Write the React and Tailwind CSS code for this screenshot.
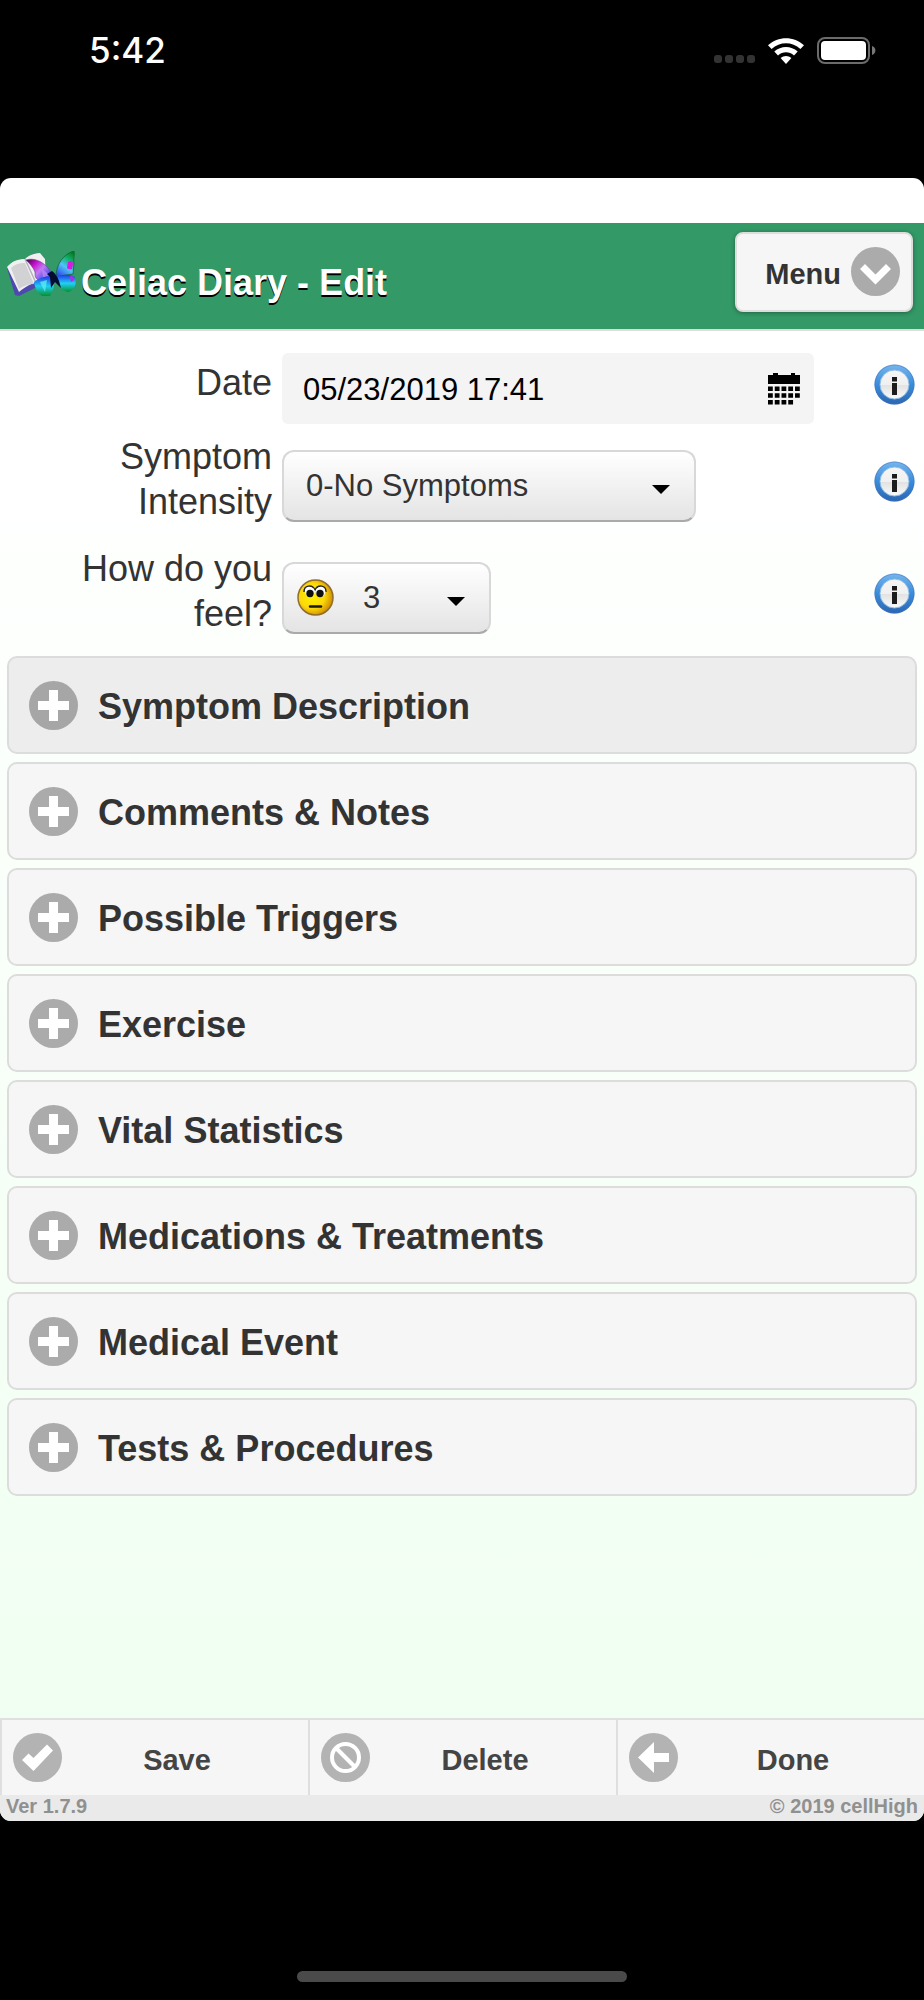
import { useState } from 'react';

const sections = [
  'Symptom Description',
  'Comments & Notes',
  'Possible Triggers',
  'Exercise',
  'Vital Statistics',
  'Medications & Treatments',
  'Medical Event',
  'Tests & Procedures',
];

const intensities = ['0-No Symptoms', '1-Very Mild', '2-Mild', '3-Moderate', '4-Severe', '5-Very Severe'];

const icons = {
  plus: <path d="M20 9h9v11h11v9H29v11h-9V29H9v-9h11z" fill="#fff" />,
  down: <path d="M9 22l5-5 10.500 10.500L35 17l5 5-15.500 15.500z" fill="#fff" />,
  check: <path d="M9 27l6.500-6.500 5 4.500L34 11.500l6 6L20.500 38z" fill="#fff" />,
  forbidden: (
    <g fill="none" stroke="#fff" strokeWidth="4">
      <circle cx="24.5" cy="24.5" r="13.5" />
      <path d="M15 15l19 19" />
    </g>
  ),
  back: <path d="M9 24.5L25 9v11h15v9H25v11z" fill="#fff" />,
};

function DiscIcon({ name, className = 'text-[#ababab]' }) {
  return (
    <svg viewBox="0 0 49 49" className={`size-[49px] shrink-0 ${className}`} aria-hidden="true">
      <circle cx="24.5" cy="24.5" r="24.5" fill="currentColor" />
      {icons[name]}
    </svg>
  );
}

function StatusBar() {
  return (
    <div className="flex h-[178px] items-start justify-between pr-12 pl-[89px] pt-[29px]">
      <span className="font-[Inter,sans-serif] text-[35px] leading-[43px] font-medium text-white">5:42</span>
      <div className="flex items-center gap-[13px] pt-2">
        <div className="flex gap-[3px] pt-[17px]">
          {[0, 1, 2, 3].map((n) => <span key={n} className="size-2 rounded-[3px] bg-[#333]" />)}
        </div>
        <svg viewBox="0 0 36 26" className="h-[26px] w-9" aria-hidden="true">
          <path d="M0 7.2C10-2.2 26-2.2 36 7.2l-3.600 3.800c-8.200-7.700-20.600-7.700-28.800 0z" fill="#fff" />
          <path d="M6.300 13.500c6.600-6.100 16.800-6.100 23.400 0l-3.700 3.900c-4.600-4.100-11.400-4.100-16 0z" fill="#fff" />
          <path d="M12.600 20.100c3.100-2.700 7.700-2.700 10.800 0L18 26z" fill="#fff" />
        </svg>
        <svg viewBox="0 0 59 27" className="h-[27px] w-[59px]" aria-hidden="true">
          <rect x="1" y="1" width="51" height="25" rx="7" fill="none" stroke="#6b6b6b" strokeWidth="2" />
          <rect x="4" y="4" width="45" height="19" rx="4" fill="#fff" />
          <path d="M55 9c4.500 1.500 4.500 7.500 0 9z" fill="#777" />
        </svg>
      </div>
    </div>
  );
}

function Logo() {
  return (
    <svg viewBox="0 0 69 45" className="h-[45px] w-[69px] shrink-0" aria-hidden="true">
      <defs>
        <linearGradient id="upperLeft" x1="0" y1=".1" x2="1" y2=".9">
          <stop offset="0" stopColor="#4a0a44" />
          <stop offset=".25" stopColor="#c810d0" />
          <stop offset=".5" stopColor="#c07cf0" />
          <stop offset=".75" stopColor="#5a50f0" />
          <stop offset="1" stopColor="#0a1060" />
        </linearGradient>
        <linearGradient id="upperRight" x1=".8" y1="0" x2=".3" y2="1">
          <stop offset="0" stopColor="#047a18" />
          <stop offset=".3" stopColor="#12b070" />
          <stop offset=".6" stopColor="#4fc4f8" />
          <stop offset="1" stopColor="#3050e8" />
        </linearGradient>
        <linearGradient id="lower" x1="0" y1="0" x2="0" y2="1">
          <stop offset="0" stopColor="#2038e8" />
          <stop offset=".5" stopColor="#20d0f4" />
          <stop offset="1" stopColor="#07902c" />
        </linearGradient>
      </defs>
      <path d="M0 17l8 27 4 1 24-12-4-28-4-3-11 7z" fill="#4f48b0" />
      <path d="M0 16C5 10 11 8 18 8c4-4 10-6 15-6l5 6 1 20c-10 2-20 7-27 13z" fill="#f0f0f0" />
      <path d="M4 17c4-4 9-5 14-5l9 21c-6 0-11 2-15 5z" fill="#d2d2d4" />
      <path d="M18 8l11 24" fill="none" stroke="#b4b0bc" strokeWidth="1.500" />
      <path d="M19 9c10-3 21 3 28 17-3 5-8 5-14 4-5-2-5-5-5-9-2-5-5-8-9-12z" fill="url(#upperLeft)" stroke="#6a3c90" strokeWidth=".6" />
      <path d="M35 18l10 8-9 2z" fill="#c090ee" opacity=".7" />
      <path d="M27 31c5-4 13-7 20-5 1 8-1 14-4 19h-8c-5-3-7-8-8-14z" fill="url(#lower)" />
      <path d="M33 31l7-2-2 12z" fill="#5ce8f0" opacity=".8" />
      <path d="M49 26c0-12 7-23 18-26 1 4-1 8 0 12l-1 11c-5 1-11 1-17 3z" fill="url(#upperRight)" stroke="#0b6a34" strokeWidth=".8" />
      <path d="M61 11c3-2 5-1 5 2l-1 5c-2 1-4 0-5-1z" fill="#d818e0" />
      <path d="M49 26c7-3 14-3 19 0 2 6 0 13-6 15-7 0-11-7-13-15z" fill="url(#lower)" />
      <path d="M63 25c3 0 5 2 4 4l-3 2z" fill="#b828e0" />
      <path d="M45 20c3 2 5 5 7 10l2 7-6-6-4 6-1-11-3-3z" fill="#060c30" />
    </svg>
  );
}

function InfoButton({ label }) {
  return (
    <button type="button" aria-label={`About ${label}`} className="mt-[11px] size-[41px] shrink-0 rounded-full">
      <svg viewBox="0 0 41 41" aria-hidden="true">
        <defs>
          <linearGradient id="ring" x1="0" y1="0" x2="0" y2="1">
            <stop offset="0" stopColor="#76b6ec" />
            <stop offset=".5" stopColor="#3a8cda" />
            <stop offset="1" stopColor="#2c66b0" />
          </linearGradient>
          <linearGradient id="face" x1="0" y1="0" x2="0" y2="1">
            <stop offset="0" stopColor="#f6f6f6" />
            <stop offset=".5" stopColor="#f0f0f0" />
            <stop offset=".52" stopColor="#e2e2e2" />
            <stop offset="1" stopColor="#fafafa" />
          </linearGradient>
        </defs>
        <circle cx="20.500" cy="20.500" r="20" fill="url(#ring)" />
        <circle cx="20.500" cy="20.500" r="19.500" fill="none" stroke="#4a6fc0" strokeOpacity=".5" />
        <circle cx="20.500" cy="20.500" r="14.500" fill="url(#face)" stroke="#8dbce6" />
        <path d="M18 13h5v4.500h-5zM18 19h5v12h-5z" fill="#1c1c1c" />
      </svg>
    </button>
  );
}

function CalendarIcon() {
  const days = [0, 1, 2].flatMap((r) => [0, 1, 2, 3, 4].map((c) => [c, r])).filter(([c, r]) => !(c === 4 && r === 2));
  return (
    <svg viewBox="0 0 32 32" className="size-8" aria-hidden="true">
      <path d="M0 2h5V0h5v2h13V0h4v2h5v9H0z" />
      {days.map(([c, r]) => <rect key={`${c}-${r}`} x={c * 6.75} y={13.5 + r * 6.75} width="4.800" height="4.500" />)}
    </svg>
  );
}

function Smiley() {
  return (
    <svg viewBox="0 0 37 37" className="size-[37px]" aria-hidden="true">
      <defs>
        <radialGradient id="skin" cx=".4" cy=".45" r=".6">
          <stop offset="0" stopColor="#fff200" />
          <stop offset=".6" stopColor="#fbd80a" />
          <stop offset="1" stopColor="#d08c00" />
        </radialGradient>
      </defs>
      <circle cx="18.500" cy="18.500" r="17.500" fill="url(#skin)" stroke="#8f6d2c" strokeWidth="1.500" />
      <path d="M7 13c0-7 8-8 11-2 3-6 11-5 11 2" fill="#fff" stroke="#222" strokeWidth="1.500" />
      <circle cx="13" cy="13" r="4.800" fill="#fff" />
      <circle cx="23.500" cy="13" r="4.800" fill="#fff" />
      <circle cx="13" cy="14.500" r="3.700" fill="#111" />
      <circle cx="23" cy="14.500" r="3.700" fill="#111" />
      <path d="M13 27.500h11" stroke="#1a1a00" strokeWidth="2.500" strokeLinecap="round" />
    </svg>
  );
}

function Caret() {
  return (
    <svg viewBox="0 0 18 9" className="pointer-events-none absolute top-[35px] right-[26px] h-[9px] w-[18px]" aria-hidden="true">
      <path d="M0 0h18L9 9z" />
    </svg>
  );
}

function Row({ id, label, children, labelClass = '', fieldClass = 'pt-4' }) {
  return (
    <div className="flex items-start gap-[10px] pr-[9px]">
      <label htmlFor={id} className={`w-[272px] shrink-0 pl-16 text-right text-4xl leading-[45px] text-[#333] ${labelClass}`}>{label}</label>
      <div className={`flex flex-1 items-start justify-between ${fieldClass}`}>
        {children}
        <InfoButton label={label} />
      </div>
    </div>
  );
}

const selectClass = 'h-[72px] w-full appearance-none rounded-xl border-2 border-[#d8d8d8] border-b-[#aaa] bg-linear-to-b from-white to-[#e4e4e4] text-[31px] text-[#333]';

function FooterButton({ icon, children }) {
  return (
    <button type="button" className="flex h-[77px] flex-1 items-center border-t-2 border-l-2 border-[#dfdfdf] bg-[#f6f6f6] pl-[11px] text-[29px] font-bold text-[#444]">
      <DiscIcon name={icon} className="text-[#b3b3b3]" />
      <span className="flex-1 pt-[6px] pr-[16px]">{children}</span>
    </button>
  );
}

export default function App() {
  const [date, setDate] = useState('05/23/2019 17:41');
  const [intensity, setIntensity] = useState(intensities[0]);
  const [feeling, setFeeling] = useState('3');

  return (
    <div className="flex min-h-screen flex-col bg-black font-['Liberation_Sans',Arial,sans-serif]">
      <StatusBar />
      <div className="flex flex-1 flex-col overflow-hidden rounded-[11px] bg-linear-to-b from-white from-15% to-[#effff0] pt-[45px]">
        <header className="flex h-[108px] items-start justify-between border-b-2 border-[#ddd] bg-[#339966] pr-[11px] pl-[7px]">
          <div className="flex pt-7">
            <Logo />
            <h1 className="pt-[14px] pl-[5px] text-4xl leading-[36px] font-bold text-white [text-shadow:0_2px_0_#000]">Celiac Diary - Edit</h1>
          </div>
          <button type="button" className="mt-[9px] flex h-20 items-center gap-[10px] rounded-lg border-2 border-[#ddd] bg-[#f6f6f6] pr-[11px] pb-[2px] pl-7 text-[29px] font-bold text-[#333] shadow-[0_1px_4px_rgba(0,0,0,0.35)]">
            <span className="pt-2">Menu</span>
            <DiscIcon name="down" />
          </button>
        </header>

        <form className="flex flex-1 flex-col pt-[22px]" onSubmit={(e) => e.preventDefault()}>
          <div className="flex flex-col">
            <Row id="date" label="Date" labelClass="pt-[7px]" fieldClass="">
              <div className="relative mr-[60px] flex-1">
                <input id="date" value={date} onChange={(e) => setDate(e.target.value)} className="h-[71px] w-full rounded-md bg-[#f4f4f4] pt-[2px] pr-16 pl-[21px] text-[31px] text-black" />
                <button type="button" aria-label="Pick a date" className="absolute top-5 right-[14px]"><CalendarIcon /></button>
              </div>
            </Row>
            <div className="mt-[10px]">
              <Row id="intensity" label="Symptom Intensity">
                <div className="relative w-[414px]">
                  <select id="intensity" value={intensity} onChange={(e) => setIntensity(e.target.value)} className={`${selectClass} pl-[22px]`}>
                    {intensities.map((item) => <option key={item}>{item}</option>)}
                  </select>
                  <Caret />
                </div>
              </Row>
            </div>
            <div className="mt-[22px]">
              <Row id="feeling" label="How do you feel?">
                <div className="relative w-[209px]">
                  <select id="feeling" value={feeling} onChange={(e) => setFeeling(e.target.value)} className={`${selectClass} pl-[79px]`}>
                    {[1, 2, 3, 4, 5].map((n) => <option key={n}>{n}</option>)}
                  </select>
                  <span className="pointer-events-none absolute top-[17px] left-[15px]"><Smiley /></span>
                  <Caret />
                </div>
              </Row>
            </div>
          </div>

          <div className="mt-5 flex flex-col gap-2 px-[7px] pb-12">
            {sections.map((title, i) => (
              <button key={title} type="button" aria-expanded="false" className={`flex h-[98px] items-center gap-5 rounded-[10px] border-2 border-[#dcdcdc] pl-5 text-left text-4xl font-bold text-[#333] ${i === 0 ? 'bg-[#ededed]' : 'bg-[#f6f6f6]'}`}>
                <DiscIcon name="plus" className={i === 0 ? 'text-[#a6a6a6]' : 'text-[#ababab]'} />
                <span className="pt-[3px] [text-shadow:0_2px_0_#f3f3f3]">{title}</span>
              </button>
            ))}
          </div>

          <div className="mt-auto flex">
            <FooterButton icon="check">Save</FooterButton>
            <FooterButton icon="forbidden">Delete</FooterButton>
            <FooterButton icon="back">Done</FooterButton>
          </div>
        </form>
        <footer className="flex h-[26px] justify-between bg-[#eaeaea] px-[6px] text-xl leading-[23px] font-bold text-[#909090]">
          <span>Ver 1.7.9</span>
          <span>© 2019 cellHigh</span>
        </footer>
      </div>
      <div className="flex h-[179px] items-end justify-center pb-[18px]">
        <div className="h-[11px] w-[330px] rounded-full bg-[#4a4a4a]" />
      </div>
    </div>
  );
}
